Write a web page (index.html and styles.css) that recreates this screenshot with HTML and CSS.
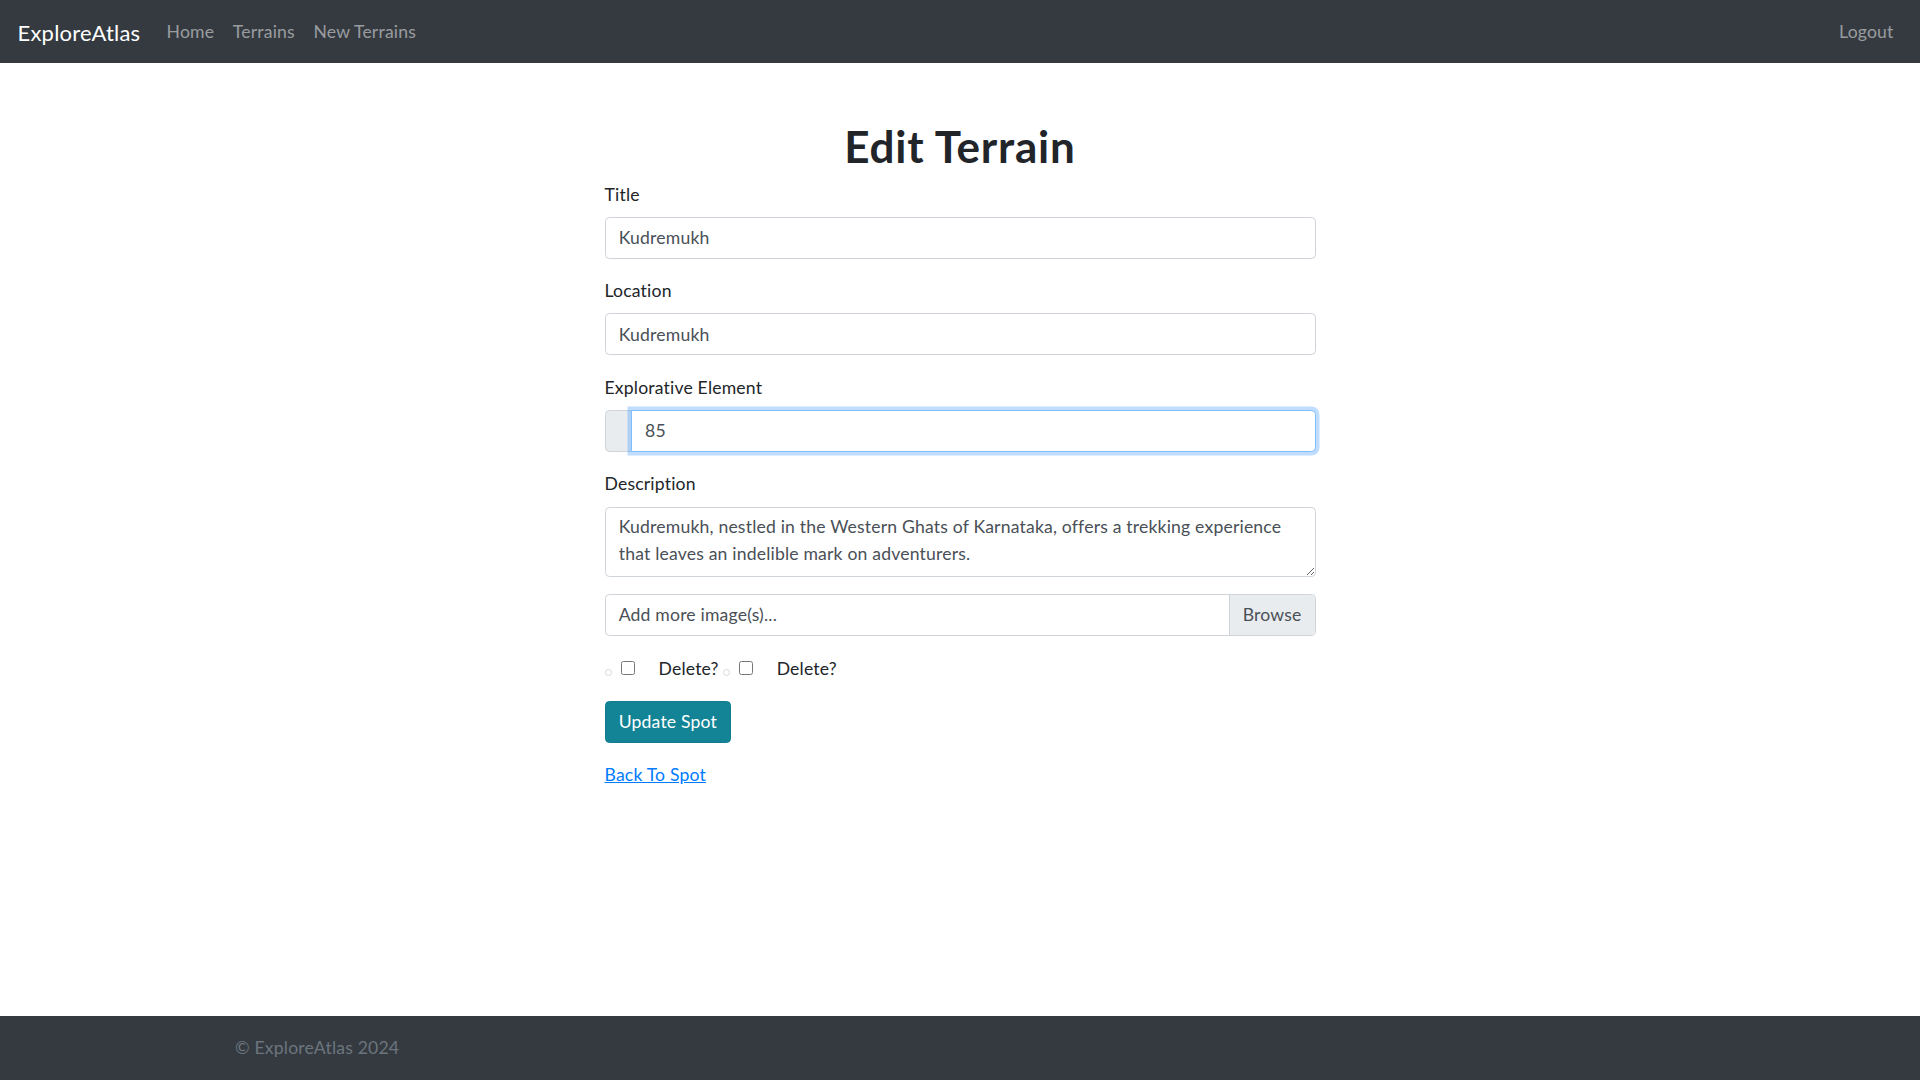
FILE: index.html
```html
<!DOCTYPE html>
<html lang="en">
<head>
<meta charset="utf-8">
<title>Edit Terrain</title>
<link rel="stylesheet" href="styles.css">
</head>
<body>
<nav class="navbar">
  <a class="brand" href="#">ExploreAtlas</a>
  <div class="nav-links">
    <a class="nav-link" href="#">Home</a>
    <a class="nav-link" href="#">Terrains</a>
    <a class="nav-link" href="#">New Terrains</a>
  </div>
  <div class="nav-right">
    <a class="nav-link" href="#">Logout</a>
  </div>
</nav>

<main class="main">
  <div class="form-col">
    <h1 class="title">Edit Terrain</h1>
    <form class="form">
      <div class="group">
        <label class="label" for="title">Title</label>
        <input class="control" id="title" type="text" value="Kudremukh">
      </div>
      <div class="group">
        <label class="label" for="location">Location</label>
        <input class="control" id="location" type="text" value="Kudremukh">
      </div>
      <div class="group">
        <label class="label" for="element">Explorative Element</label>
        <div class="input-group">
          <span class="prepend"></span>
          <input class="control control-joined is-focus" id="element" type="text" value="85">
        </div>
      </div>
      <div class="group group-tight">
        <label class="label" for="desc">Description</label>
        <textarea class="control textarea" id="desc">Kudremukh, nestled in the Western Ghats of Karnataka, offers a trekking experience that leaves an indelible mark on adventurers.</textarea>
      </div>
      <div class="group group-file">
        <div class="custom-file">
          <span class="file-label">Add more image(s)...</span>
          <span class="file-browse">Browse</span>
        </div>
      </div>
      <div class="group check-row">
        <div class="check-item">
          <span class="thumb"></span>
          <input class="check" type="checkbox" id="d1">
          <label class="check-label" for="d1">Delete?</label>
        </div>
        <div class="check-item">
          <span class="thumb"></span>
          <input class="check" type="checkbox" id="d2">
          <label class="check-label" for="d2">Delete?</label>
        </div>
      </div>
      <button class="btn-info" type="button">Update Spot</button>
    </form>
    <div class="back">
      <a class="back-link" href="#">Back To Spot</a>
    </div>
  </div>
</main>

<footer class="footer">
  <span class="footer-text">© ExploreAtlas 2024</span>
</footer>
</body>
</html>
```

FILE: styles.css
```css
* { box-sizing: border-box; }

html, body {
  margin: 0;
  padding: 0;
}

body {
  font-family: Lato, "Liberation Sans", sans-serif;
  font-size: 17.6px;
  line-height: 26.4px;
  letter-spacing: 0.18px;
  color: #212529;
  background: #fff;
  min-height: 100vh;
  display: flex;
  flex-direction: column;
}

/* navbar */
.navbar {
  height: 63px;
  background: #343a40;
  display: flex;
  align-items: center;
  padding: 2px 17.6px 0;
}

.brand {
  color: #fff;
  font-size: 22px;
  text-decoration: none;
  margin-right: 17.6px;
  line-height: 33px;
}

.nav-links {
  display: flex;
}

.nav-right {
  margin-left: auto;
  display: flex;
}

.nav-link {
  color: rgba(255, 255, 255, 0.5);
  text-decoration: none;
  padding: 0 8.8px;
}

.nav-links .nav-link + .nav-link {
  margin-left: 1px;
}

/* main */
.main {
  flex: 1;
  padding-top: 57px;
}

.form-col {
  width: 711px;
  margin: 0 auto;
}

.title {
  font-size: 44px;
  line-height: 52.8px;
  font-weight: 700;
  letter-spacing: 0.8px;
  text-align: center;
  margin: 0 0 8.8px;
  color: #212529;
}

.form {
  margin: 0;
}

.group {
  margin-bottom: 19.6px;
}

.group-tight {
  margin-bottom: 17.4px;
}

.group-file {
  margin-bottom: 19.6px;
}

.label {
  display: block;
  margin-bottom: 8.8px;
  height: 26.4px;
}

.control {
  display: block;
  width: 100%;
  height: 41.8px;
  padding: 6.6px 13.2px;
  font-family: inherit;
  font-size: 17.6px;
  line-height: 26.4px;
  letter-spacing: 0.18px;
  color: #495057;
  background: #fff;
  border: 1px solid #ced4da;
  border-radius: 4.4px;
  outline: none;
}

.input-group {
  display: flex;
  align-items: stretch;
}

.prepend {
  width: 27.4px;
  height: 41.8px;
  background: #e9ecef;
  border: 1px solid #ced4da;
  border-radius: 4.4px 0 0 4.4px;
  flex: none;
}

.control-joined {
  flex: 1;
  width: auto;
  margin-left: -1px;
  border-radius: 0 4.4px 4.4px 0;
  position: relative;
}

.is-focus {
  border-color: #80bdff;
  box-shadow: 0 0 0 3.5px rgba(0, 123, 255, 0.25);
}

.textarea {
  height: 70px;
  resize: vertical;
}

.custom-file {
  display: flex;
  height: 42.5px;
  border: 1px solid #ced4da;
  border-radius: 4.4px;
  overflow: hidden;
  color: #495057;
}

.file-label {
  flex: 1;
  padding: 6.6px 13.2px;
}

.file-browse {
  background: #e9ecef;
  border-left: 1px solid #ced4da;
  padding: 6.6px 13.2px;
  width: 86px;
}

.check-row {
  display: flex;
  align-items: center;
  height: 26.4px;
  margin-bottom: 18.6px;
}

.check-item {
  display: flex;
  align-items: center;
}

.check-item + .check-item {
  margin-left: 4px;
}

.thumb {
  width: 7px;
  height: 7px;
  border: 1px solid #d5d8db;
  border-radius: 50%;
  margin-top: 6px;
  margin-right: 9px;
}

.check {
  width: 14px;
  height: 14px;
  margin: 0 24px 3px 0;
}

.check-label {
  color: #212529;
}

.btn-info {
  display: block;
  height: 41.8px;
  padding: 6.6px 13.2px;
  font-family: inherit;
  font-size: 17.6px;
  line-height: 26.4px;
  letter-spacing: 0.18px;
  color: #fff;
  background: #138496;
  border: 1px solid #117a8b;
  border-radius: 4.4px;
}

.back {
  margin-top: 19px;
}

.back-link {
  color: #007bff;
  text-decoration: underline;
}

/* footer */
.footer {
  height: 64px;
  background: #343a40;
  display: flex;
  align-items: center;
  padding-left: 235px;
}

.footer-text {
  color: #6c757d;
}
```
